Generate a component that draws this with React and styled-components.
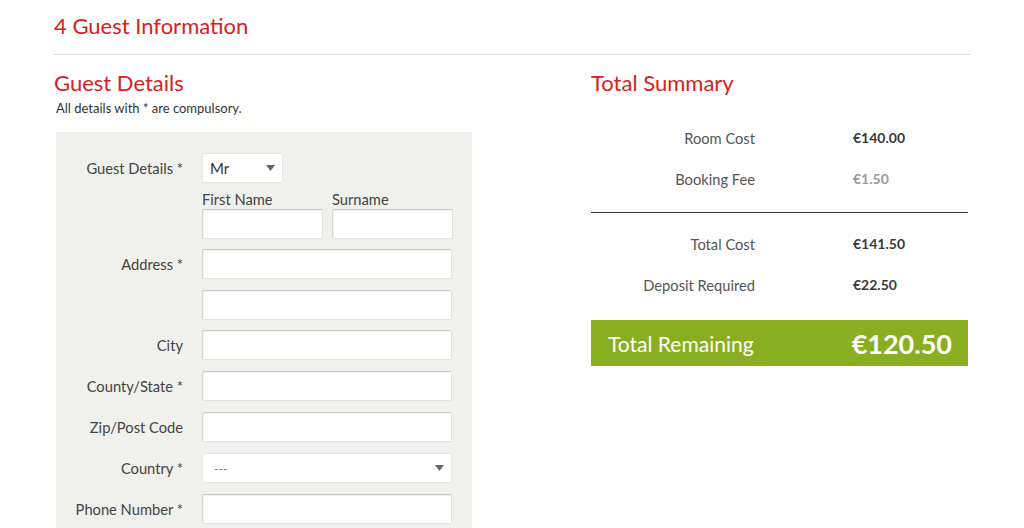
import React from "react";
import styled, { createGlobalStyle } from "styled-components";

const GlobalStyle = createGlobalStyle`
  body {
    margin: 0;
    background: #fff;
    font-family: Lato, "Open Sans", sans-serif;
    color: #444;
  }
`;

const red = "#d9201c";

const summaryRows = [
  { label: "Room Cost", value: "€140.00" },
  { label: "Booking Fee", value: "€1.50", muted: true },
];

const totalRows = [
  { label: "Total Cost", value: "€141.50" },
  { label: "Deposit Required", value: "€22.50" },
];

const addressFields = [
  { label: "Address *", gap: 10 },
  { label: "", gap: 11 },
  { label: "City", gap: 10 },
  { label: "County/State *", gap: 11 },
  { label: "Zip/Post Code", gap: 11 },
  { label: "Country *", gap: 11, select: "---" },
  { label: "Phone Number *", gap: 11 },
];

const Arrow = () => (
  <svg width="9" height="6" viewBox="0 0 9 6">
    <path d="M0 0h9L4.5 6z" fill="#666" />
  </svg>
);

const App = () => {
  return (
    <Page>
      <GlobalStyle />
      <StepTitle>4 Guest Information</StepTitle>
      <Divider />
      <Columns>
        <div>
          <SectionTitle>Guest Details</SectionTitle>
          <Note>All details with * are compulsory.</Note>
          <Panel>
            <Row>
              <Label>Guest Details *</Label>
              <SelectWrap $width={81}>
                <Select $size={15} $pad={7} defaultValue="Mr">
                  <option>Mr</option>
                  <option>Mrs</option>
                  <option>Ms</option>
                </Select>
                <ArrowSlot>
                  <Arrow />
                </ArrowSlot>
              </SelectWrap>
            </Row>
            <NameRow>
              <Label />
              <NameCol>
                <SmallLabel>First Name</SmallLabel>
                <Input $width={121} />
              </NameCol>
              <NameCol>
                <SmallLabel>Surname</SmallLabel>
                <Input $width={121} />
              </NameCol>
            </NameRow>
            {addressFields.map((f, i) => (
              <Row key={i} $gap={f.gap}>
                <Label>{f.label}</Label>
                {f.select ? (
                  <SelectWrap $width={250}>
                    <Select $size={12} $pad={11} $muted defaultValue="---">
                      <option>---</option>
                    </Select>
                    <ArrowSlot>
                      <Arrow />
                    </ArrowSlot>
                  </SelectWrap>
                ) : (
                  <Input $width={250} />
                )}
              </Row>
            ))}
          </Panel>
        </div>
        <div>
          <SectionTitle>Total Summary</SectionTitle>
          <SummaryList>
            {summaryRows.map((r) => (
              <SummaryRow key={r.label}>
                <SummaryLabel>{r.label}</SummaryLabel>
                <SummaryValue $muted={r.muted}>{r.value}</SummaryValue>
              </SummaryRow>
            ))}
          </SummaryList>
          <SummaryRule />
          <SummaryList $top={10}>
            {totalRows.map((r) => (
              <SummaryRow key={r.label}>
                <SummaryLabel>{r.label}</SummaryLabel>
                <SummaryValue>{r.value}</SummaryValue>
              </SummaryRow>
            ))}
          </SummaryList>
          <RemainingBar>
            <RemainingLabel>Total Remaining</RemainingLabel>
            <RemainingValue>€120.50</RemainingValue>
          </RemainingBar>
        </div>
      </Columns>
    </Page>
  );
};

const Page = styled.div`
  width: 916px;
  padding-left: 54px;
`;

const StepTitle = styled.h1`
  margin: 0;
  padding-top: 12px;
  height: 30px;
  line-height: 28px;
  font-size: 22px;
  font-weight: 400;
  color: ${red};
`;

const Divider = styled.hr`
  margin: 12px 0 0;
  border: none;
  border-top: 1px solid #dcdcdc;
`;

const Columns = styled.div`
  display: grid;
  grid-template-columns: 537px 377px;
`;

const SectionTitle = styled.h2`
  margin: 0;
  padding-top: 14px;
  line-height: 28px;
  font-size: 22px;
  font-weight: 400;
  color: ${red};
`;

const Note = styled.p`
  margin: 3px 0 0 2px;
  font-size: 13px;
  line-height: 16px;
  color: #333;
`;

const Panel = styled.div`
  margin: 16px 0 0 2px;
  width: 416px;
  height: 420px;
  padding-top: 21px;
  background: #f0f0ec;
  box-sizing: border-box;
`;

const Row = styled.div`
  display: flex;
  align-items: center;
  margin-top: ${({ $gap }) => ($gap ? `${$gap}px` : "0")};
`;

const Label = styled.div`
  width: 127px;
  margin-right: 19px;
  text-align: right;
  font-size: 14.7px;
  color: #444;
  flex-shrink: 0;
  white-space: nowrap;
`;

const NameRow = styled.div`
  display: flex;
  margin-top: 8px;
`;

const NameCol = styled.div`
  display: flex;
  flex-direction: column;
  margin-right: 9px;
`;

const SmallLabel = styled.div`
  font-size: 14.7px;
  line-height: 16px;
  margin-bottom: 2px;
  color: #444;
`;

const Input = styled.input`
  width: ${({ $width }) => $width}px;
  height: 30px;
  box-sizing: border-box;
  border: 1px solid #e2e2de;
  border-top-color: #c9c9c6;
  border-left-color: #d4d4d0;
  border-radius: 2px;
  background: #fff;
  box-shadow: inset 1px 1px 1px rgba(0, 0, 0, 0.06);
  outline: none;
  padding: 0 8px;
`;

const SelectWrap = styled.div`
  position: relative;
  width: ${({ $width }) => $width}px;
  height: 30px;
`;

const Select = styled.select`
  appearance: none;
  width: 100%;
  height: 100%;
  box-sizing: border-box;
  border: 1px solid #e6e6e2;
  border-radius: 2px;
  background: #fff;
  padding: 0 ${({ $pad }) => $pad}px;
  font-family: Lato, "Open Sans", sans-serif;
  font-size: ${({ $size }) => $size}px;
  color: ${({ $muted }) => ($muted ? "#777" : "#333")};
  outline: none;
`;

const ArrowSlot = styled.span`
  position: absolute;
  right: 8px;
  top: 12px;
  line-height: 0;
  pointer-events: none;
`;

const SummaryList = styled.div`
  display: flex;
  flex-direction: column;
  margin-top: ${({ $top }) => ($top ? `${$top}px` : "20px")};
`;

const SummaryRow = styled.div`
  display: grid;
  grid-template-columns: 164px auto;
  column-gap: 98px;
  height: 41px;
  align-items: center;
`;

const SummaryLabel = styled.div`
  text-align: right;
  font-size: 14.7px;
  color: #555;
  white-space: nowrap;
`;

const SummaryValue = styled.div`
  font-size: 14px;
  font-weight: 700;
  color: ${({ $muted }) => ($muted ? "#9a9a9a" : "#3a3a3a")};
`;

const SummaryRule = styled.div`
  margin-top: 13px;
  border-top: 1px solid #333;
`;

const RemainingBar = styled.div`
  margin-top: 15px;
  height: 46px;
  background: #8aae22;
  display: flex;
  align-items: center;
  justify-content: space-between;
  padding: 0 16px 0 17px;
  color: #fff;
`;

const RemainingLabel = styled.span`
  font-size: 21px;
`;

const RemainingValue = styled.span`
  font-size: 27px;
  font-weight: 700;
`;

export default App;
